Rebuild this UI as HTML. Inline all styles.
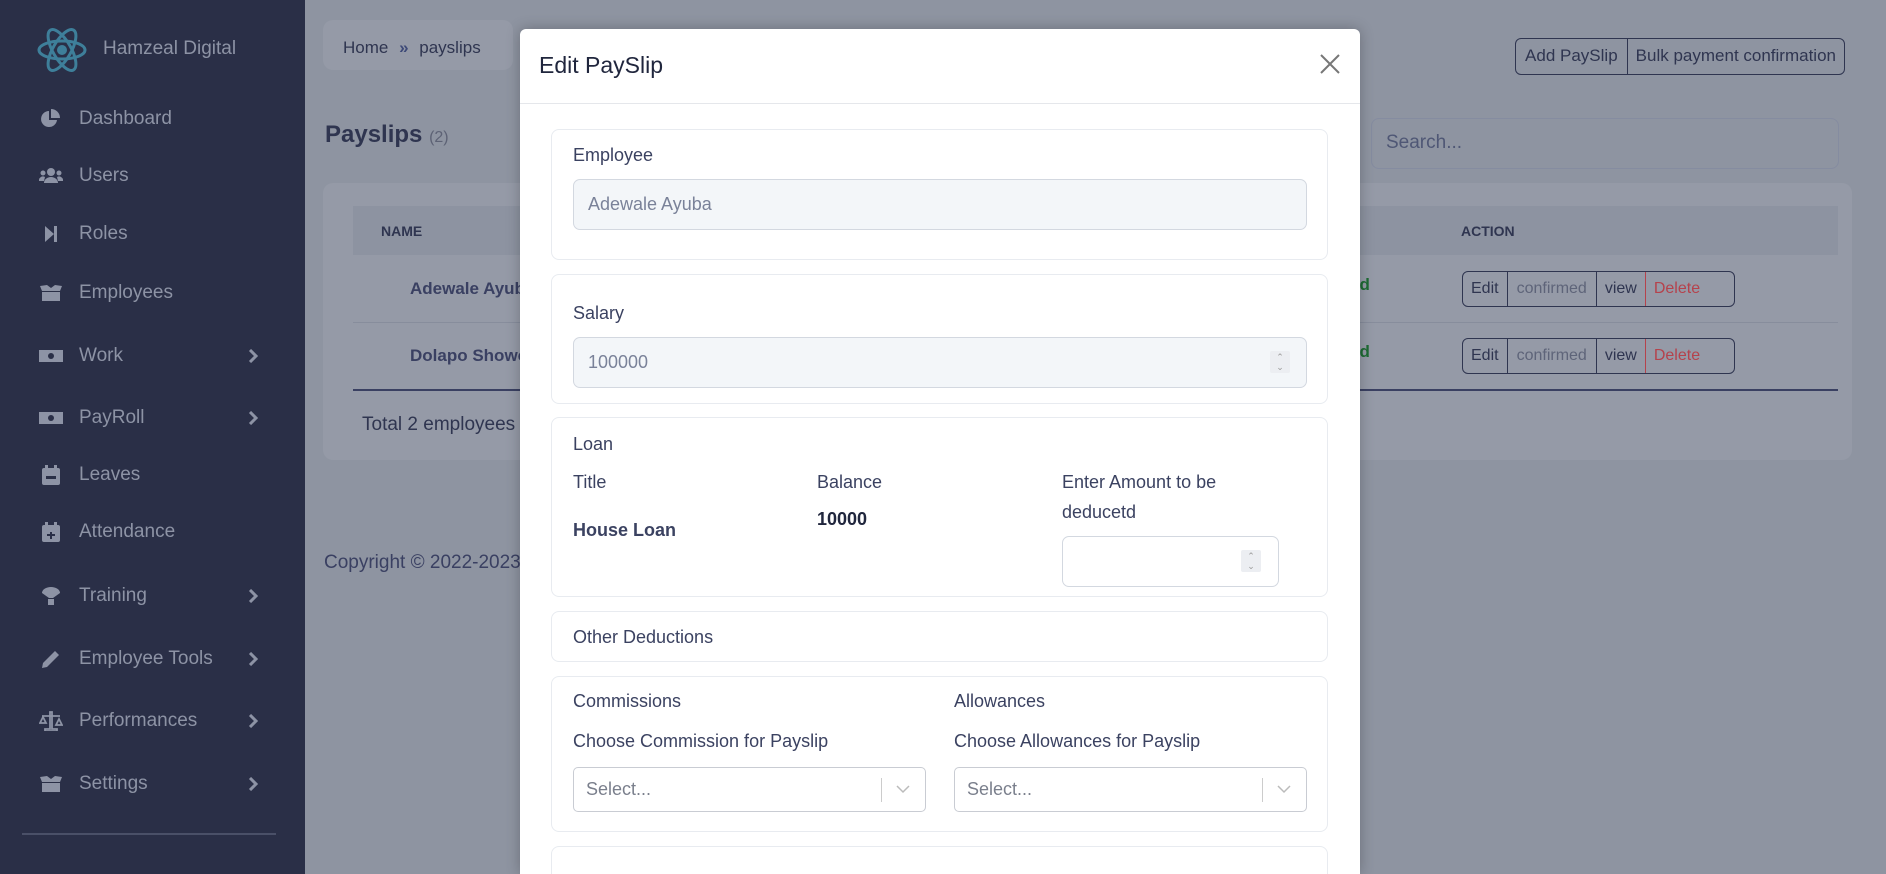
<!DOCTYPE html>
<html><head><meta charset="utf-8"><style>
*{box-sizing:border-box;margin:0;padding:0}
html{width:1886px;height:874px;overflow:hidden}
body{width:1886px;height:874px;overflow:hidden;background:#8e94a1;font-family:"Liberation Sans",sans-serif;position:relative;color:#2f3550}
.a{position:absolute}
.sb{left:0;top:0;width:305px;height:874px;background:#2a2f47}
.mi{position:absolute;left:0;width:305px;color:#8d93a5;font-size:19px;height:30px;line-height:30px}
.mi .ic{position:absolute;left:39px;top:5px;width:24px;height:20px}
.mi .t{position:absolute;left:79px}
.mi .ch{position:absolute;left:248px;top:8px;width:10px;height:14px}
.card{position:absolute;background:#959aa7;border-radius:10px}
.bg{border:1px solid #2f3550;border-radius:6px;display:flex;height:36px;font-size:16px;overflow:hidden;white-space:nowrap}
.bg span{padding:0 8px;line-height:34px;border-right:1px solid #2f3550}
.modal{left:520px;top:29px;width:840px;height:845px;background:#fff;border-radius:6px 6px 0 0;box-shadow:0 0 14px rgba(0,0,0,.25);overflow:hidden}
.sec{position:absolute;left:31px;width:777px;border:1px solid #e8ebf0;border-radius:8px}
.lb{position:absolute;font-size:18px;color:#3b4261}
.inp{position:absolute;background:#f3f6f9;border:1px solid #d3d8e0;border-radius:7px;font-size:18px;color:#7a8299;padding-left:14px}
.sel{position:absolute;border:1px solid #c9ccd3;border-radius:5px;background:#fff;font-size:18px;color:#7a7f8c;padding-left:12px;line-height:43px}
.spin{position:absolute;width:20px;height:22px;background:#eceef2;border-radius:2px;font-size:9px;color:#999;text-align:center;line-height:10px;padding-top:1px}
</style></head><body>
<div class="a sb">
  <svg class="a" style="left:36px;top:27px" width="52" height="46" viewBox="0 0 52 46"><g fill="none" stroke="#3e7f9a" stroke-width="3"><ellipse cx="26" cy="23" rx="23" ry="9"/><ellipse cx="26" cy="23" rx="23" ry="9" transform="rotate(60 26 23)"/><ellipse cx="26" cy="23" rx="23" ry="9" transform="rotate(-60 26 23)"/></g><circle cx="26" cy="23" r="5" fill="#3e7f9a"/></svg>
  <div class="a" style="left:103px;top:38px;font-size:19px;color:#8d93a5">Hamzeal Digital</div>
  <div class="mi" style="top:104px"><svg class="ic" viewBox="0 0 24 20"><path d="M10 2a8 8 0 1 0 8 9h-8z" fill="#8d93a5"/><path d="M12 0v9h9a9 9 0 0 0-9-9z" fill="#8d93a5"/></svg><span class="t">Dashboard</span></div>
  <div class="mi" style="top:161px"><svg class="ic" viewBox="0 0 24 20"><circle cx="12" cy="6" r="4" fill="#8d93a5"/><circle cx="4" cy="7" r="2.5" fill="#8d93a5"/><circle cx="20" cy="7" r="2.5" fill="#8d93a5"/><path d="M5 17a7 6 0 0 1 14 0zM0 15a4 4 0 0 1 6-4l-1 4zM24 15a4 4 0 0 0-6-4l1 4z" fill="#8d93a5"/></svg><span class="t">Users</span></div>
  <div class="mi" style="top:219px"><svg class="ic" viewBox="0 0 24 20"><path d="M6 2l9 8-9 8zM15 2h3v16h-3z" fill="#8d93a5"/></svg><span class="t">Roles</span></div>
  <div class="mi" style="top:278px"><svg class="ic" viewBox="0 0 24 20"><path d="M1 3l7-1 4 3 4-3 7 1-2 5H3zM3 9h18v9H3z" fill="#8d93a5"/></svg><span class="t">Employees</span></div>
  <div class="mi" style="top:341px"><svg class="ic" viewBox="0 0 24 20"><rect x="0" y="4" width="24" height="12" fill="#8d93a5"/><circle cx="12" cy="10" r="3" fill="#2a2f47"/></svg><span class="t">Work</span><svg class="ch" viewBox="0 0 10 14"><path d="M2 1l6 6-6 6" stroke="#8d93a5" stroke-width="3" fill="none"/></svg></div>
  <div class="mi" style="top:403px"><svg class="ic" viewBox="0 0 24 20"><rect x="0" y="4" width="24" height="12" fill="#8d93a5"/><circle cx="12" cy="10" r="3" fill="#2a2f47"/></svg><span class="t">PayRoll</span><svg class="ch" viewBox="0 0 10 14"><path d="M2 1l6 6-6 6" stroke="#8d93a5" stroke-width="3" fill="none"/></svg></div>
  <div class="mi" style="top:460px"><svg class="ic" viewBox="0 0 24 20"><rect x="3" y="3" width="18" height="17" rx="2" fill="#8d93a5"/><rect x="6" y="0" width="3" height="5" fill="#8d93a5"/><rect x="15" y="0" width="3" height="5" fill="#8d93a5"/><rect x="7" y="11" width="10" height="3" fill="#2a2f47"/></svg><span class="t">Leaves</span></div>
  <div class="mi" style="top:517px"><svg class="ic" viewBox="0 0 24 20"><rect x="3" y="3" width="18" height="17" rx="2" fill="#8d93a5"/><rect x="6" y="0" width="3" height="5" fill="#8d93a5"/><rect x="15" y="0" width="3" height="5" fill="#8d93a5"/><path d="M11 10h2v7h-2zM8 12h8v2H8z" fill="#2a2f47"/></svg><span class="t">Attendance</span></div>
  <div class="mi" style="top:581px"><svg class="ic" viewBox="0 0 24 20"><path d="M3 7a9 6 0 0 1 18 0l-7 5h-4z" fill="#8d93a5"/><rect x="9" y="13" width="6" height="6" fill="#8d93a5"/></svg><span class="t">Training</span><svg class="ch" viewBox="0 0 10 14"><path d="M2 1l6 6-6 6" stroke="#8d93a5" stroke-width="3" fill="none"/></svg></div>
  <div class="mi" style="top:644px"><svg class="ic" viewBox="0 0 24 20"><path d="M3 19l1-5 12-12 4 4-12 12z" fill="#8d93a5"/></svg><span class="t">Employee Tools</span><svg class="ch" viewBox="0 0 10 14"><path d="M2 1l6 6-6 6" stroke="#8d93a5" stroke-width="3" fill="none"/></svg></div>
  <div class="mi" style="top:706px"><svg class="ic" viewBox="0 0 24 20"><path d="M11 1h2v17h5v2H6v-2h5zM3 5h18M1 12l3-6 3 6zM17 14l3-6 3 6z" stroke="#8d93a5" stroke-width="1.8" fill="none"/></svg><span class="t">Performances</span><svg class="ch" viewBox="0 0 10 14"><path d="M2 1l6 6-6 6" stroke="#8d93a5" stroke-width="3" fill="none"/></svg></div>
  <div class="mi" style="top:769px"><svg class="ic" viewBox="0 0 24 20"><path d="M1 3l7-1 4 3 4-3 7 1-2 5H3zM3 9h18v9H3z" fill="#8d93a5"/></svg><span class="t">Settings</span><svg class="ch" viewBox="0 0 10 14"><path d="M2 1l6 6-6 6" stroke="#8d93a5" stroke-width="3" fill="none"/></svg></div>
  <div class="a" style="left:22px;top:833px;width:254px;height:2px;background:#4a5068"></div>
</div>

<div class="card" style="left:323px;top:20px;width:190px;height:50px"></div>
<div class="a" style="left:343px;top:38px;font-size:17px">Home <b style="color:#3e4a78;margin:0 6px">»</b> payslips</div>
<div class="a" style="left:325px;top:121px;font-size:24px;font-weight:bold">Payslips <span style="font-size:16px;font-weight:normal;color:#5d6275">(2)</span></div>
<div class="card" style="left:323px;top:183px;width:1529px;height:277px"></div>
<div class="a" style="left:353px;top:206px;width:1485px;height:49px;background:#8d93a1"></div>
<div class="a" style="left:381px;top:223px;font-size:14px;font-weight:bold">NAME</div>
<div class="a" style="left:1461px;top:223px;font-size:14px;font-weight:bold">ACTION</div>
<div class="a" style="left:410px;top:279px;font-size:17px;font-weight:bold;color:#3a4062">Adewale Ayuba</div>
<div class="a" style="left:410px;top:346px;font-size:17px;font-weight:bold;color:#3a4062">Dolapo Showo</div>
<div class="a" style="left:353px;top:322px;width:1485px;height:1px;background:#878d9c"></div>
<div class="a" style="left:353px;top:389px;width:1485px;height:2px;background:#3a4062"></div>
<div class="a" style="left:1350px;top:275px;font-size:17px;font-weight:bold;color:#1e6b34">ed</div>
<div class="a" style="left:1350px;top:342px;font-size:17px;font-weight:bold;color:#1e6b34">ed</div>
<div class="a bg" style="left:1462px;top:271px;width:273px"><span>Edit</span><span style="color:#5e6479;padding:0 9px">confirmed</span><span style="border-right-color:#b5424c">view</span><span style="color:#b5424c;border:0">Delete</span></div>
<div class="a bg" style="left:1462px;top:338px;width:273px"><span>Edit</span><span style="color:#5e6479;padding:0 9px">confirmed</span><span style="border-right-color:#b5424c">view</span><span style="color:#b5424c;border:0">Delete</span></div>
<div class="a" style="left:362px;top:414px;font-size:19px">Total 2 employees</div>
<div class="a" style="left:324px;top:552px;font-size:19px;color:#3a4062">Copyright © 2022-2023</div>
<div class="a bg" style="right:41px;top:38px;height:37px;font-size:17px"><span style="padding:0 9px">Add PaySlip</span><span style="border:0;padding:0 8px">Bulk payment confirmation</span></div>
<div class="a" style="left:1371px;top:118px;width:468px;height:51px;border:1px solid #858ca0;border-radius:8px;font-size:19px;color:#4f5775;padding:13px 14px">Search...</div>

<div class="a modal">
  <div class="a" style="left:19px;top:23px;font-size:23px;color:#20263d">Edit PaySlip</div>
  <svg class="a" style="left:799px;top:24px" width="22" height="22" viewBox="0 0 22 22"><path d="M2 2l18 18M20 2L2 20" stroke="#777" stroke-width="2"/></svg>
  <div class="a" style="left:0;top:74px;width:840px;height:1px;background:#e5e7eb"></div>

  <div class="sec" style="top:100px;height:131px"></div>
  <div class="lb" style="left:53px;top:116px">Employee</div>
  <div class="inp" style="left:53px;top:150px;width:734px;height:51px;line-height:49px">Adewale Ayuba</div>

  <div class="sec" style="top:245px;height:130px"></div>
  <div class="lb" style="left:53px;top:274px">Salary</div>
  <div class="inp" style="left:53px;top:308px;width:734px;height:51px;line-height:49px">100000</div>
  <div class="spin" style="left:750px;top:322px">⌃<br>⌄</div>

  <div class="sec" style="top:388px;height:180px"></div>
  <div class="lb" style="left:53px;top:405px">Loan</div>
  <div class="lb" style="left:53px;top:443px">Title</div>
  <div class="lb" style="left:297px;top:443px">Balance</div>
  <div class="lb" style="left:542px;top:438px;line-height:30px">Enter Amount to be<br>deducetd</div>
  <div class="lb" style="left:53px;top:491px;font-weight:bold">House Loan</div>
  <div class="lb" style="left:297px;top:480px;font-weight:bold;color:#20263d">10000</div>
  <div class="a" style="left:542px;top:507px;width:217px;height:51px;border:1px solid #d3d8e0;border-radius:7px"></div>
  <div class="spin" style="left:721px;top:521px">⌃<br>⌄</div>

  <div class="sec" style="top:582px;height:51px"></div>
  <div class="lb" style="left:53px;top:598px">Other Deductions</div>

  <div class="sec" style="top:647px;height:156px"></div>
  <div class="lb" style="left:53px;top:662px">Commissions</div>
  <div class="lb" style="left:434px;top:662px">Allowances</div>
  <div class="lb" style="left:53px;top:702px">Choose Commission for Payslip</div>
  <div class="lb" style="left:434px;top:702px">Choose Allowances for Payslip</div>
  <div class="sel" style="left:53px;top:738px;width:353px;height:45px">Select...<span class="a" style="left:307px;top:10px;width:1px;height:24px;background:#ccc"></span><svg class="a" style="left:322px;top:17px" width="14" height="10"><path d="M1 1l6 6 6-6" stroke="#bbb" stroke-width="1.5" fill="none"/></svg></div>
  <div class="sel" style="left:434px;top:738px;width:353px;height:45px">Select...<span class="a" style="left:307px;top:10px;width:1px;height:24px;background:#ccc"></span><svg class="a" style="left:322px;top:17px" width="14" height="10"><path d="M1 1l6 6 6-6" stroke="#bbb" stroke-width="1.5" fill="none"/></svg></div>

  <div class="sec" style="top:817px;height:60px"></div>
</div>
</body></html>
